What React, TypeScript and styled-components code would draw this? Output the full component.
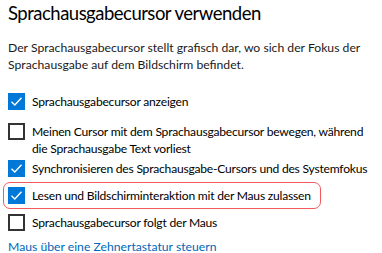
import React from 'react';
import styled, { createGlobalStyle } from 'styled-components';

const GlobalStyle = createGlobalStyle`
  html, body {
    margin: 0;
    padding: 0;
    background: #ffffff;
  }
  body {
    font-family: Lato, "Noto Sans", sans-serif;
    color: #000000;
  }
`;

const Page = styled.div`
  display: flex;
  flex-direction: column;
  align-items: flex-start;
  padding: 0 0 0 8px;
  width: 382px;
  height: 253px;
  box-sizing: border-box;
  overflow: hidden;
`;

const Title = styled.h1`
  margin: 0;
  font-size: 18.5px;
  line-height: 27px;
  font-weight: 400;
  letter-spacing: -0.5px;
  color: #000;
`;

const Description = styled.p`
  margin: 12px 0 0;
  font-size: 12.2px;
  line-height: 17px;
  color: #1a1a1a;
`;

const Options = styled.div`
  display: flex;
  flex-direction: column;
  align-items: flex-start;
  margin-top: 20px;
`;

const Row = styled.label<{ $gap: number; $highlight?: boolean }>`
  position: relative;
  display: flex;
  align-items: flex-start;
  gap: 7px;
  margin-top: ${({ $gap }) => $gap}px;
  font-size: 12.1px;
  line-height: 17px;
  letter-spacing: -0.22px;
  color: #000;

  &::after {
    content: '';
    display: ${({ $highlight }) => ($highlight ? 'block' : 'none')};
    position: absolute;
    left: -5px;
    right: -10px;
    top: -5px;
    bottom: -5px;
    border: 1.4px solid #f05a5f;
    border-radius: 7px;
    pointer-events: none;
  }
`;

const Box = styled.span<{ $checked: boolean }>`
  flex: none;
  width: 17px;
  height: 17px;
  box-sizing: border-box;
  display: flex;
  align-items: center;
  justify-content: center;
  background: ${({ $checked }) => ($checked ? '#0078d7' : '#ffffff')};
  border: ${({ $checked }) => ($checked ? 'none' : '2px solid #333333')};
`;

const Label = styled.span`
  max-width: 349px;
`;

const Link = styled.a`
  margin-top: 7px;
  font-size: 12.2px;
  line-height: 17px;
  color: #0067b8;
  text-decoration: none;
`;

const Check = () => (
  <svg width="13" height="13" viewBox="0 0 13 13">
    <path d="M1.5 6.8 L4.8 10 L11.5 2.8" fill="none" stroke="#fff" strokeWidth="1.4" />
  </svg>
);

type Option = { label: string; checked: boolean; gap: number; highlight?: boolean };

const options: Option[] = [
  { label: 'Sprachausgabecursor anzeigen', checked: true, gap: 0 },
  {
    label: 'Meinen Cursor mit dem Sprachausgabecursor bewegen, während die Sprachausgabe Text vorliest',
    checked: false,
    gap: 13,
  },
  { label: 'Synchronisieren des Sprachausgabe-Cursors und des Systemfokus', checked: true, gap: 3 },
  { label: 'Lesen und Bildschirminteraktion mit der Maus zulassen', checked: true, gap: 10, highlight: true },
  { label: 'Sprachausgabecursor folgt der Maus', checked: false, gap: 10 },
];

export default function App() {
  return (
    <>
      <GlobalStyle />
      <Page>
        <Title>Sprachausgabecursor verwenden</Title>
        <Description>
          Der Sprachausgabecursor stellt grafisch dar, wo sich der Fokus der Sprachausgabe auf dem
          Bildschirm befindet.
        </Description>
        <Options>
          {options.map((o) => (
            <Row key={o.label} $gap={o.gap} $highlight={o.highlight}>
              <Box $checked={o.checked}>{o.checked && <Check />}</Box>
              <Label>{o.label}</Label>
            </Row>
          ))}
          <Link href="#">Maus über eine Zehnertastatur steuern</Link>
        </Options>
      </Page>
    </>
  );
}
